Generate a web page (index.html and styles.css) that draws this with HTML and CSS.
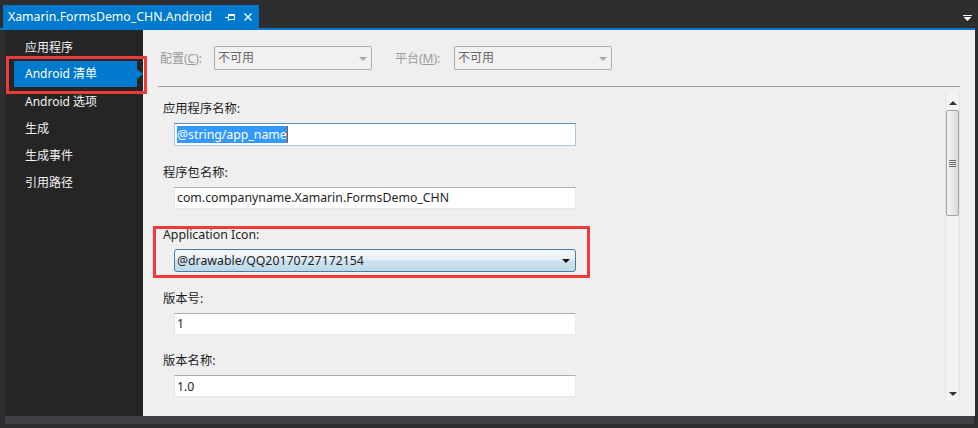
FILE: index.html
```html
<!DOCTYPE html>
<html lang="zh-CN">
<head>
    <meta charset="UTF-8">
    <meta name="viewport" content="width=device-width, initial-scale=1.0">
    <title>Xamarin.FormsDemo_CHN.Android</title>
    <link rel="stylesheet" href="styles.css">
</head>
<body>
    <div class="tabwell">
        <div class="tab">
            <span class="tab-title">Xamarin.FormsDemo_CHN.Android</span>
            <svg class="tab-pin" width="10" height="8" viewBox="0 0 10 8">
                <path d="M0 4.5H3.5M3.5 1V8M3.5 1.5H9.5V6.5H3.5M3.5 2.5H9.5" fill="none" stroke="#fff" stroke-width="1"/>
            </svg>
            <svg class="tab-close" width="8" height="8" viewBox="0 0 8 8">
                <path d="M0.5 0.5L7.5 7.5M7.5 0.5L0.5 7.5" stroke="#fff" stroke-width="1.3"/>
            </svg>
        </div>
        <svg class="tab-menu" width="9" height="6" viewBox="0 0 9 6">
            <rect x="0" y="0" width="9" height="1" fill="#fff"/>
            <path d="M0.5 2H8.5L4.5 6Z" fill="#fff"/>
        </svg>
    </div>
    <div class="tabline"></div>

    <div class="main">
        <ul class="sidebar">
            <li>应用程序</li>
            <li class="active">Android 清单<span class="callout"></span></li>
            <li>Android 选项</li>
            <li>生成</li>
            <li>生成事件</li>
            <li>引用路径</li>
        </ul>

        <div class="content">
            <div class="config">
                <span class="cfg-label">配置(<u>C</u>):</span>
                <div class="cfg-select">不可用<i class="caret"></i></div>
                <span class="cfg-label wide">平台(<u>M</u>):</span>
                <div class="cfg-select">不可用<i class="caret"></i></div>
            </div>
            <div class="separator"></div>

            <div class="scroller">
                <div class="form">
                    <div class="field">
                        <div class="field-label">应用程序名称:</div>
                        <div class="textbox focused"><span class="selected">@string/app_name</span><span class="cursor"></span></div>
                    </div>
                    <div class="field">
                        <div class="field-label">程序包名称:</div>
                        <div class="textbox">com.companyname.Xamarin.FormsDemo_CHN</div>
                    </div>
                    <div class="field">
                        <div class="field-label">Application Icon:</div>
                        <div class="combo">@drawable/QQ20170727172154<i class="combo-arrow"></i></div>
                        <span class="callout"></span>
                    </div>
                    <div class="field">
                        <div class="field-label">版本号:</div>
                        <div class="textbox">1</div>
                    </div>
                    <div class="field">
                        <div class="field-label">版本名称:</div>
                        <div class="textbox">1.0</div>
                    </div>
                </div>

                <div class="vscroll">
                    <div class="vs-btn"><i class="vs-up"></i></div>
                    <div class="vs-thumb"><span class="grip"></span></div>
                    <div class="vs-track"></div>
                    <div class="vs-btn"><i class="vs-down"></i></div>
                </div>
            </div>
        </div>
    </div>

    <div class="statusbar"></div>
</body>
</html>
```

FILE: styles.css
```css
* {
    box-sizing: border-box;
}
body {
    margin: 0;
    width: 978px;
    height: 428px;
    overflow: hidden;
    background: #2d2d30;
    font-family: "Noto Sans", "Noto Sans CJK SC", sans-serif;
    font-size: 12.3px;
    color: #1e1e1e;
}

/* document tab */
.tabwell {
    display: flex;
    align-items: flex-end;
    height: 28px;
    padding: 0 6px 0 3px;
}
.tab {
    display: flex;
    align-items: center;
    width: 256px;
    height: 23px;
    padding: 0 7px 0 5px;
    background: #007acc;
    color: #fff;
}
.tab-title {
    flex: 1;
}
.tab-pin {
    margin-right: 9px;
}
.tab-menu {
    margin-left: auto;
    margin-bottom: 7px;
}
.tabline {
    height: 2px;
    margin-right: 3px;
    background: #007acc;
}

.main {
    display: flex;
    height: 386px;
    padding: 0 3px 0 5px;
}

/* left navigation */
.sidebar {
    width: 138px;
    margin: 0;
    padding: 4px 0 0;
    list-style: none;
    background: #252526;
    color: #f1f1f1;
    font-size: 12px;
}
.sidebar li {
    position: relative;
    width: 123px;
    height: 27px;
    margin-left: 9px;
    padding-left: 11px;
    line-height: 27px;
}
.sidebar li.active {
    height: 26px;
    margin-bottom: 1px;
    line-height: 26px;
    background: #007acc;
    color: #fff;
}
.sidebar li.active::after {
    content: "";
    position: absolute;
    right: -6px;
    top: 8px;
    border-left: 6px solid #007acc;
    border-top: 5px solid transparent;
    border-bottom: 5px solid transparent;
}
.callout {
    position: absolute;
    border: 3px solid #ef3a3a;
    pointer-events: none;
}
.sidebar .callout {
    left: -8px;
    right: -10px;
    top: -5px;
    bottom: -7px;
}

/* property page */
.content {
    display: flex;
    flex-direction: column;
    width: 832px;
    background: #efefef;
}
.config {
    display: flex;
    align-items: center;
    padding: 16px 0 0 17px;
    color: #9a9a9a;
    font-size: 12px;
}
.cfg-label {
    width: 54px;
}
.cfg-label.wide {
    width: 59px;
}
.cfg-select {
    position: relative;
    width: 158px;
    height: 24px;
    margin-right: 23px;
    padding-left: 3px;
    border: 1px solid #adadad;
    border-radius: 2px;
    background: #f1f1f1;
    color: #6a6a6a;
    line-height: 22px;
}
.caret {
    position: absolute;
    right: 4px;
    top: 10px;
    border-top: 4px solid #a9a9a9;
    border-left: 4px solid transparent;
    border-right: 4px solid transparent;
}
.separator {
    height: 1px;
    margin: 16px 15px 0;
    background: #a0a0a0;
}

.scroller {
    display: flex;
    flex: 1;
    min-height: 0;
}
.form {
    flex: 1;
    padding: 14px 0 0 20px;
}
.field {
    position: relative;
    width: 413px;
    margin-bottom: 18.5px;
}
.field-label {
    line-height: 16px;
    margin-bottom: 6px;
}
.textbox {
    display: flex;
    align-items: center;
    height: 22px;
    margin-left: 11px;
    padding-left: 2px;
    border: 1px solid;
    border-color: #abadb3 #e3e9ef #e3e9ef #e2e3ea;
    background: #fff;
}
.textbox.focused {
    height: 23px;
    border-color: #5b8fc0 #a9c7e4 #a9c7e4 #a9c7e4;
}
.selected {
    height: 17px;
    line-height: 17px;
    background: #3399ff;
    color: #fff;
}
.cursor {
    width: 1px;
    height: 17px;
    background: #b0500f;
}
.combo {
    position: relative;
    display: flex;
    align-items: center;
    height: 23px;
    margin-left: 11px;
    padding-left: 2px;
    border: 1px solid #4d7aa0;
    border-radius: 3px;
    background: linear-gradient(#f3f8fc 0%, #e4eff7 48%, #cde2ef 52%, #bfd9e8 100%);
}
.combo-arrow {
    position: absolute;
    right: 5px;
    top: 9px;
    border-top: 4px solid #111;
    border-left: 4px solid transparent;
    border-right: 4px solid transparent;
}
.field .callout {
    left: -10px;
    right: -14px;
    top: -1px;
    bottom: -6px;
}

/* vertical scrollbar */
.vscroll {
    display: flex;
    flex-direction: column;
    width: 15px;
    margin: 6px 15px 14px 0;
    border-left: 1px solid #e4e4e4;
    border-right: 1px solid #e4e4e4;
    background: #f2f2f2;
}
.vs-btn {
    display: flex;
    align-items: center;
    justify-content: center;
    height: 17px;
}
.vs-up {
    margin-top: 3px;
    border-bottom: 4px solid #333;
    border-left: 4px solid transparent;
    border-right: 4px solid transparent;
}
.vs-down {
    border-top: 4px solid #333;
    border-left: 4px solid transparent;
    border-right: 4px solid transparent;
}
.vs-thumb {
    display: flex;
    align-items: center;
    justify-content: center;
    height: 106px;
    border: 1px solid #a2a2a2;
    border-radius: 2px;
    background: linear-gradient(to right, #f4f4f4, #d9d9d9);
}
.grip {
    width: 7px;
    height: 7px;
    background: repeating-linear-gradient(#6f6f6f 0 1px, transparent 1px 2px);
}
.vs-track {
    flex: 1;
}

.statusbar {
    height: 8px;
    margin: 0 4px 0 5px;
    background: #3f3f46;
}
```
